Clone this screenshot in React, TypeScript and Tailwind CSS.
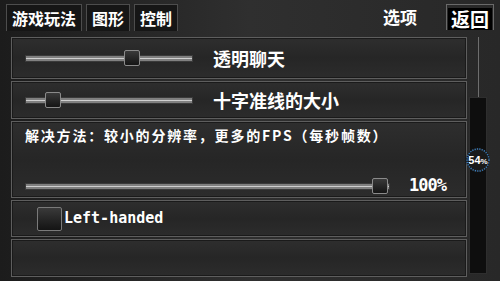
import React from "react";

const cjk = { fontFamily: '"Noto Sans CJK SC", "Noto Sans", sans-serif' };
const pixel = { fontFamily: '"DejaVu Sans Mono", "Liberation Mono", monospace' };

function Slider({ width, pos }: { width: number; pos: number }) {
  return (
    <div className="relative h-[16px]" style={{ width }}>
      <div className="absolute left-0 right-0 top-[5px] h-[7px] bg-[#808080] border border-[#3a3a3a]">
        <div className="mt-[2px] h-[1px] bg-[#cfcfcf]" />
      </div>
      <div
        className="absolute top-0 w-[16px] h-[16px] rounded-[2px] border border-[#8a8a8a] bg-gradient-to-b from-[#3a3a3a] to-[#151515]"
        style={{ left: pos }}
      />
    </div>
  );
}

function Row({ className, children }: { className: string; children?: React.ReactNode }) {
  return (
    <div
      className={`border border-[#5e5e5e] bg-gradient-to-b from-[#2e2e2e] via-[#262626] to-[#2c2c2c] shadow-[inset_0_0_0_1px_#1a1a1a] ${className}`}
    >
      {children}
    </div>
  );
}

export default function App() {
  const tabs = ["游戏玩法", "图形", "控制"];
  return (
    <div className="w-[500px] h-[281px] overflow-hidden bg-gradient-to-r from-[#1c1c1c] via-[#2f2f2f] to-[#282828] text-white" style={cjk}>
      {/* header */}
      <div className="h-[37px] flex items-start pt-[4px] pl-[6px]">
        <div className="flex gap-[4px]">
          {tabs.map((t) => (
            <div
              key={t}
              className="h-[27px] px-[5px] flex items-center bg-[#161616] border-t border-x border-[#4d4d4d] text-[16px] font-bold leading-none"
            >
              {t}
            </div>
          ))}
        </div>
        <div className="flex-1" />
        <div className="mt-[4px] mr-[29px] text-[17px] font-bold leading-none">选项</div>
        <div className="mr-[6px] w-[48px] h-[26px] border-t border-x border-[#6a6a6a] pt-[3px] px-[1px]">
          <div className="bg-black text-[19px] font-bold leading-[22px] text-center">返回</div>
        </div>
      </div>

      {/* body */}
      <div className="flex pl-[11px]">
        <div className="w-[456px] flex flex-col gap-[2px]">
          <Row className="h-[42px] flex items-center pl-[13px]">
            <Slider width={168} pos={99} />
            <div className="ml-[20px] text-[18px] font-bold">透明聊天</div>
          </Row>
          <Row className="h-[38px] flex items-center pl-[13px]">
            <Slider width={168} pos={20} />
            <div className="ml-[20px] text-[18px] font-bold">十字准线的大小</div>
          </Row>
          <Row className="h-[77px] flex flex-col pl-[13px] pt-[3px]">
            <div className="text-[14px] font-bold tracking-[1.8px]">解决方法：较小的分辨率，更多的FPS（每秒帧数）</div>
            <div className="mt-[27px] flex items-center">
              <Slider width={365} pos={347} />
              <div className="ml-[19px] text-[17px] font-bold tracking-[-1px]" style={pixel}>
                100%
              </div>
            </div>
          </Row>
          <Row className="h-[37px] flex items-center pl-[25px]">
            <div className="w-[25px] h-[24px] rounded-[2px] border border-[#7a7a7a] bg-gradient-to-b from-[#3a3a3a] to-[#141414]" />
            <div className="ml-[2px] text-[15px] font-bold" style={pixel}>
              Left-handed
            </div>
          </Row>
          <Row className="h-[38px]" />
        </div>

        {/* scrollbar */}
        <div className="relative ml-[1px] w-[20px] flex flex-col items-center">
          <div className="w-[1px] h-[60px] bg-[#6e6e6e]" />
          <div className="w-[18px] h-[177px] bg-[#0e0e0e] border border-[#2e2e2e]" />
          <div className="absolute left-[-2px] top-[111px] w-[24px] h-[24px] rounded-full bg-[#1a1a1a] flex items-center justify-center">
            <svg width="24" height="24" viewBox="0 0 24 24" className="absolute inset-0">
              <circle cx="12" cy="12" r="11" fill="none" stroke="#3a7fc0" strokeWidth="1.5" strokeDasharray="1.2 1.2" />
            </svg>
            <span className="relative text-[11px] font-bold leading-none" style={{ fontFamily: '"Liberation Sans", sans-serif' }}>
              54<span className="text-[8px]">%</span>
            </span>
          </div>
        </div>
      </div>
    </div>
  );
}
